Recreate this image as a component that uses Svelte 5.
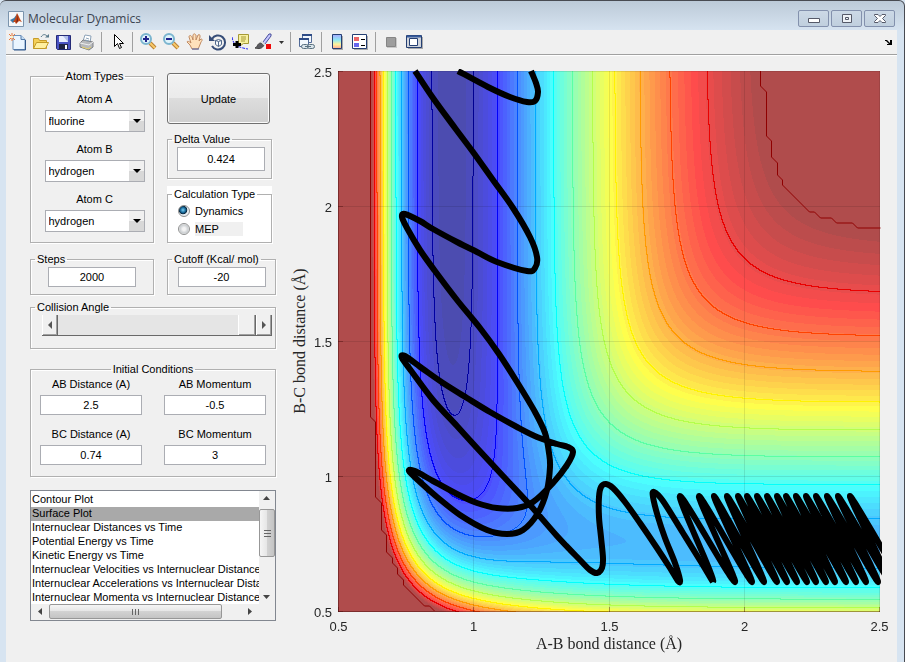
<script>
	import { onMount } from 'svelte';

	const atoms = ['fluorine', 'hydrogen', 'chlorine'];
	let selectedAtoms = { A: 'fluorine', B: 'hydrogen', C: 'hydrogen' };
	let delta = '0.424';
	let calculation = 'Dynamics';
	let steps = '2000';
	let cutoff = '-20';
	let angle = 180;

	let conditions = [
		{ id: 'ab-distance', label: 'AB Distance (A)', value: '2.5' },
		{ id: 'ab-momentum', label: 'AB Momentum', value: '-0.5' },
		{ id: 'bc-distance', label: 'BC Distance (A)', value: '0.74' },
		{ id: 'bc-momentum', label: 'BC Momentum', value: '3' }
	];

	const plots = [
		'Contour Plot',
		'Surface Plot',
		'Internuclear Distances vs Time',
		'Potential Energy vs Time',
		'Kinetic Energy vs Time',
		'Internuclear Velocities vs Internuclear Distance',
		'Internuclear Accelerations vs Internuclear Distance',
		'Internuclear Momenta vs Internuclear Distance'
	];
	let plot = plots[1];

	const ticks = [0.5, 1, 1.5, 2, 2.5];
	const W = 542;
	const H = 541;
	const px = (x) => Math.round(((x - 0.5) * (W - 1)) / 2) + 0.5;
	const py = (y) => Math.round(((2.5 - y) * (H - 1)) / 2) + 0.5;

	// Morse parameters: depth (kcal/mol), range (1/A), equilibrium distance (A), Sato
	const HF = { d: 141.2, b: 2.2187, r: 0.917, k: 0.167 };
	const HH = { d: 109.45, b: 1.942, r: 0.742, k: 0.2 };

	function terms(p, r) {
		const e = Math.exp(-p.b * (r - p.r));
		const f = p.d / 4 / (1 + p.k);
		return [
			f * ((3 + p.k) * e * e - (2 + 6 * p.k) * e),
			f * ((1 + 3 * p.k) * e * e - (6 + 2 * p.k) * e)
		];
	}

	// LEPS energy of the collinear system
	function energy(ab, bc) {
		const [q1, j1] = terms(HF, ab);
		const [q2, j2] = terms(HH, bc);
		const [q3, j3] = terms(HF, ab + bc);
		return q1 + q2 + q3 - Math.sqrt(((j1 - j2) ** 2 + (j2 - j3) ** 2 + (j3 - j1) ** 2) / 2);
	}

	const clamp = (v) => Math.max(0, Math.min(1, v));
	const jet = (t) => [3, 2, 1].map((c) => 255 * clamp(1.5 - Math.abs(4 * t - c)));

	let canvas;

	function drawSurface() {
		const ctx = canvas.getContext('2d');
		const image = ctx.createImageData(W, H);
		const top = Number(cutoff);
		const bottom = -HF.d;
		const levels = 64;
		const first = -137.2;
		const spacing = 10.45;
		const grid = [];
		for (let j = 0; j <= H; j++) {
			const row = new Float64Array(W + 1);
			for (let i = 0; i <= W; i++) {
				row[i] = energy(0.5 + (i * 2) / (W - 1), 2.5 - (j * 2) / (H - 1));
			}
			grid.push(row);
		}
		// the outermost level is drawn as its own line
		const band = (v) => Math.min(10, Math.floor((v - first) / spacing));
		for (let j = 0; j < H; j++) {
			for (let i = 0; i < W; i++) {
				const v = grid[j][i];
				const here = band(v);
				const near = [band(grid[j][i + 1]), band(grid[j + 1][i])];
				const other = near[0] !== here ? near[0] : near[1];
				let rgb;
				if (other !== here) {
					const level = first + spacing * Math.max(here, other);
					rgb = jet((level - bottom) / (top - bottom));
				} else {
					const n = Math.floor(clamp((v - bottom) / (top - bottom)) * levels);
					rgb = jet((Math.min(n, levels - 2) + 1) / levels).map((c) => c * 0.7 + 76);
				}
				image.data.set([...rgb, 255], (j * W + i) * 4);
			}
		}
		ctx.putImageData(image, 0, 0);
	}

	onMount(drawSurface);

	// trajectory through the reaction region, in plot pixels
	const loop = [[193, 0], [198, 12], [200, 21], [197, 30], [189, 31], [172, 26], [150, 16], [120, 0]];
	const path = [
		[77, 0], [95, 27], [117, 57], [135, 81], [155, 109], [175, 137], [192, 166], [199, 186],
		[197, 197], [189, 200], [159, 191], [139, 181], [119, 171], [95, 158], [82, 150], [67, 143],
		[64, 146], [69, 157], [82, 179], [97, 200], [119, 229], [142, 257], [161, 283], [179, 311],
		[197, 341], [207, 362], [211, 382], [212, 396], [209, 419], [200, 442], [185, 459], [169, 463],
		[149, 459], [122, 444], [99, 426], [82, 411], [71, 400], [77, 400], [95, 410], [119, 423],
		[139, 432], [159, 437], [179, 437], [195, 431], [215, 412], [229, 394], [235, 381], [230, 376],
		[219, 373], [199, 366], [179, 356], [152, 341], [129, 327], [105, 312], [85, 298], [67, 285],
		[64, 287], [74, 301], [95, 329], [119, 355], [139, 377], [165, 405], [192, 434], [219, 465],
		[242, 489], [252, 499], [259, 502], [264, 497], [265, 487], [263, 466], [261, 446], [261, 426],
		[263, 416], [268, 413], [275, 417], [287, 431], [302, 452], [319, 477], [332, 497], [340, 510],
		[342, 509], [337, 492], [327, 467], [320, 446], [315, 426], [316, 421], [325, 430], [345, 462],
		[363, 491], [375, 511]
	];

	// vibration of B-C while A is still far away: turning points at the top and the bottom
	const tops = [342, 361, 376, 389, 400, 409, 419, 429, 439, 448, 458, 468, 478, 489, 500, 512];
	const bottoms = [375, 397, 414, 426, 439, 449, 459, 469, 478, 488, 497, 508, 518, 528, 540, 552, 565];
	const vibration = [];
	function swing(x0, y0, x1, y1, drift) {
		for (let n = 0; n <= 16; n++) {
			const u = n / 16;
			const s = (1 - Math.cos(Math.PI * u)) / 2;
			vibration.push([x0 + (x1 - x0 - drift) * s + drift * u, y0 + (y1 - y0) * s]);
		}
	}
	tops.forEach((x, i) => {
		const drift = (bottoms[i + 1] - bottoms[i]) / 2;
		swing(bottoms[i], 511, x, 425, drift);
		swing(x, 425, bottoms[i + 1], 511, drift);
	});

	function smooth(points) {
		let d = `M${points[0]}`;
		for (let i = 0; i < points.length - 1; i++) {
			const a = points[i - 1] ?? points[i];
			const b = points[i];
			const c = points[i + 1];
			const e = points[i + 2] ?? c;
			d += `C${b[0] + (c[0] - a[0]) / 6} ${b[1] + (c[1] - a[1]) / 6} ${c[0] - (e[0] - b[0]) / 6} ${c[1] - (e[1] - b[1]) / 6} ${c[0]} ${c[1]}`;
		}
		return d;
	}
</script>

<div class="window">
	<header class="titlebar">
		<svg class="logo" width="16" height="16" viewBox="0 0 16 16" aria-hidden="true">
			<path d="M.5.5h15v15H.5z" fill="#f4f7fa" stroke="#7b94ad" />
			<path d="M2 9l4-2 3-4-1 6-3 3z" fill="#3d79a8" />
			<path d="M5 11l2-3 2-6c2 3 3 7 5 9l-3-1-3 3-1-2z" fill="#c44716" />
			<path d="M9 3c0 4 0 6-1 9l2-2z" fill="#6b211c" />
		</svg>
		<h1>Molecular Dynamics</h1>
		<button class="caption" aria-label="Minimize">
			<svg width="12" height="12" viewBox="0 0 12 12"><path d="M.5 5.500h11v4H.5z" fill="#fff" stroke="#555968" /></svg>
		</button>
		<button class="caption" aria-label="Maximize">
			<svg width="12" height="12" viewBox="0 0 12 12"><path d="M1.500 1.500h9v8h-9zM4.500 4.500h3v2h-3z" fill="#eef2f6" stroke="#555968" /></svg>
		</button>
		<button class="caption" aria-label="Close">
			<svg width="12" height="12" viewBox="0 0 12 12"><path d="M.5 1.500h3.500l2 2 2-2h3.500v1L8.500 5.500l3 3v1H8l-2-2-2 2H.5v-1l3-3-3-3z" fill="#fff" stroke="#555968" /></svg>
		</button>
	</header>

	<div class="client">
		<nav class="toolbar">
			<button aria-label="New Figure">
				<svg width="18" height="18" viewBox="0 0 18 18"><path d="M4 2.500h8l4 4v10H4z" fill="#eaf5ff" stroke="#6f93bd" /><path d="M12 2.500v4h4" fill="#c7def3" stroke="#5379a8" /><path d="M16.500 7v10H5" fill="none" stroke="#31578a" /><path d="M0 1l6 6M6 1L0 7M3 0v8" stroke="#e9793c" /><path d="M2 3h2v2H2z" fill="#fff3c0" /></svg>
			</button>
			<button aria-label="Open File">
				<svg width="18" height="18" viewBox="0 0 18 18"><path d="M1.500 15.500v-10h5l1 2h7v8z" fill="#f4cf57" stroke="#c79c2a" /><path d="M1.500 15.500l3-6h12l-3 6z" fill="#fff0a0" stroke="#c29a27" /><path d="M9 4c2-3 4-3 6-1" fill="none" stroke="#58788a" /><path d="M13 4.500h4V1z" fill="#58788a" /></svg>
			</button>
			<button aria-label="Save Figure">
				<svg width="18" height="18" viewBox="0 0 18 18"><path d="M1.500 2.500h14v14h-13l-1-1z" fill="#4b54c4" stroke="#252b77" /><path d="M4 3h9v6H4z" fill="#e8edff" /><path d="M8 3h5v6z" fill="#aebde9" /><path d="M4 11h9v5H4z" fill="#202443" /><path d="M10 12h2v4h-2z" fill="#fff" /></svg>
			</button>
			<button aria-label="Print Figure">
				<svg width="18" height="18" viewBox="0 0 18 18"><path d="M5 8l2-6 6 1-1 7z" fill="#fff" stroke="#8ca2b8" /><path d="M2 10l3-3 10 2v5l-4 3-9-3z" fill="#b7b9bc" stroke="#7d7f84" /><path d="M2 10l9 2 4-3" fill="none" stroke="#efefef" /><path d="M4 14l6 2 3-2" stroke="#e5cf68" fill="none" /><path d="M8 5l3 1M7 7l4 1" stroke="#8ca4ba" /></svg>
			</button>
			<span class="separator"></span>
			<button aria-label="Edit Plot">
				<svg width="18" height="18" viewBox="0 0 18 18"><path d="M5.500 1.500v12l3-3 2 5 2-1-2-4h4z" fill="#fff" stroke="#000" /></svg>
			</button>
			<span class="separator"></span>
			<button aria-label="Zoom In">
				<svg width="18" height="18" viewBox="0 0 18 18"><path d="M10 10l5 5" stroke="#b98135" stroke-width="4" /><path d="M10 10l5 5" stroke="#f8c96a" stroke-width="2" /><circle cx="6" cy="6" r="5" fill="#dff3fb" stroke="#7bb5cf" stroke-width="2" /><path d="M3 6h6M6 3v6" stroke="#20248c" stroke-width="2" /></svg>
			</button>
			<button aria-label="Zoom Out">
				<svg width="18" height="18" viewBox="0 0 18 18"><path d="M10 10l5 5" stroke="#b98135" stroke-width="4" /><path d="M10 10l5 5" stroke="#f8c96a" stroke-width="2" /><circle cx="6" cy="6" r="5" fill="#dff3fb" stroke="#7bb5cf" stroke-width="2" /><path d="M3 6h6" stroke="#20248c" stroke-width="2" /></svg>
			</button>
			<button aria-label="Pan">
				<svg width="18" height="18" viewBox="0 0 18 18"><path d="M6 16l-2-4-3-3c0-1 2-1 4 1L3 4c0-2 2-2 3 0l1 3V2c1-2 2-1 3 0v5l2-5c2-1 2 0 2 2l-1 4 2-2c2 0 1 2 0 3l-2 5-1 2z" fill="#ffe1bb" stroke="#c08a62" /><path d="M6 16h7" stroke="#4a5fa3" /></svg>
			</button>
			<button aria-label="Rotate 3D">
				<svg width="18" height="18" viewBox="0 0 18 18"><path d="M3 6a7 7 0 1 1 0 7" fill="none" stroke="#364d78" stroke-width="2" /><path d="M0 2v6h6z" fill="#364d78" /><path d="M6.500 7.500l3-1 3 1v4l-3 2-3-2zM6.500 7.500l3 1 3-1M9.500 8.500v5" fill="#f4f8fb" stroke="#52698c" /></svg>
			</button>
			<button aria-label="Data Cursor">
				<svg width="18" height="18" viewBox="0 0 18 18"><path d="M0 4c1 6 3 10 16 12" fill="none" stroke="#2424f0" stroke-dasharray="3 1" /><path d="M6.500 1.500h10v9h-5l-3 2v-2h-2z" fill="#f7f0a0" stroke="#a59935" /><path d="M9 4h5M9 6h5M9 8h4" stroke="#a59935" /><path d="M1 11.500h8M5 8v7" stroke="#000" stroke-width="3" /></svg>
			</button>
			<button aria-label="Brush Data">
				<svg width="18" height="18" viewBox="0 0 18 18"><path d="M8 9l6-8h2v2l-6 8z" fill="#c4c6ff" stroke="#474c9a" /><path d="M0 15c3-1 2-5 6-5l3 2c-2 4-5 4-9 3z" fill="#5a5a60" stroke="#444" /><path d="M6 8l4 4" stroke="#ddd" stroke-width="2" /><path d="M11 11h5v5h-5z" fill="#f00808" /></svg>
			</button>
			<button class="caret" aria-label="Brush Color">
				<svg width="5" height="3" viewBox="0 0 5 3"><path d="M0 0h5L2.500 3z" fill="#333" /></svg>
			</button>
			<span class="separator"></span>
			<button aria-label="Link Plot">
				<svg width="18" height="18" viewBox="0 0 18 18"><path d="M4.500 1.500h9v8h-9z" fill="#f3f8fd" stroke="#526b98" /><path d="M4 2h10" stroke="#2f4c86" stroke-width="2" /><path d="M1.500 5.500h9v8h-9z" fill="#f3f8fd" stroke="#526b98" /><path d="M1 6h10" stroke="#2f4c86" stroke-width="2" /><rect x="3.500" y="11.500" width="7" height="4" rx="2" fill="#d9e4ea" stroke="#5a7180" /><rect x="9.500" y="11.500" width="7" height="4" rx="2" fill="#d9e4ea" stroke="#5a7180" /><path d="M7 13.500h6" stroke="#5a7180" /></svg>
			</button>
			<span class="separator"></span>
			<button aria-label="Insert Colorbar">
				<svg width="18" height="18" viewBox="0 0 18 18">
					<defs><linearGradient id="bar" x1="0" y1="0" x2="0" y2="1"><stop offset="0" stop-color="#a9a9ff" /><stop offset=".4" stop-color="#8feaf4" /><stop offset=".7" stop-color="#fff39a" /><stop offset="1" stop-color="#ffa997" /></linearGradient></defs>
					<path d="M4 3h10v14H4z" fill="#aaa" /><path d="M3.500 1.500h9v14h-9z" fill="url(#bar)" stroke="#243f73" />
				</svg>
			</button>
			<button aria-label="Insert Legend">
				<svg width="18" height="18" viewBox="0 0 18 18"><path d="M2 3h14v14H2z" fill="#aaa" /><path d="M.5 1.500h14v14H.5z" fill="#fff" stroke="#243f73" /><path d="M2 4h5v4H2z" fill="#ed6666" /><path d="M2 10h5v4H2z" fill="#6666ef" /><path d="M9 6.500h4M9 12.500h4" stroke="#000" /></svg>
			</button>
			<span class="separator"></span>
			<button aria-label="Hide Plot Tools">
				<svg width="18" height="18" viewBox="0 0 18 18"><path d="M4 5h10v10H4z" fill="#c9c9c9" /><path d="M3.500 4.500h9v9h-9z" fill="#9d9d9d" stroke="#858585" /></svg>
			</button>
			<button aria-label="Show Plot Tools">
				<svg width="18" height="18" viewBox="0 0 18 18"><path d="M2 4h15v12H2z" fill="#aaa" /><path d="M.5 2.500h15v12H.5z" fill="#cfd3da" stroke="#243f73" /><path d="M1 3.500h14" stroke="#365b9d" stroke-width="2" /><path d="M3.500 5.500h8v7h-8z" fill="#fff" stroke="#243f73" /></svg>
			</button>
			<button class="dock" aria-label="Dock Figure">
				<svg width="8" height="6" viewBox="0 0 8 6"><path d="M0 1h2l3 3V1h2v5H2V5h2L1 2H0z" fill="#000" /></svg>
			</button>
		</nav>

		<main>
			<form class="controls" on:submit|preventDefault={drawSurface}>
				<fieldset class="atoms">
					<legend>Atom Types</legend>
					{#each Object.keys(selectedAtoms) as name}
						<div class="field">
							<label for="atom-{name}">Atom {name}</label>
							<span class="dropdown">
								<select id="atom-{name}" bind:value={selectedAtoms[name]}>
									{#each atoms as atom}
										<option value={atom}>{atom}</option>
									{/each}
								</select>
							</span>
						</div>
					{/each}
				</fieldset>

				<div class="side">
					<button class="update" type="submit">Update</button>
					<fieldset>
						<legend><label for="delta">Delta Value</label></legend>
						<input id="delta" class="tall" type="text" bind:value={delta} />
					</fieldset>
					<div class="white">
						<fieldset>
							<legend>Calculation Type</legend>
							<label class="choice">
								<input type="radio" name="calculation" value="Dynamics" bind:group={calculation} />
								Dynamics
							</label>
							<label class="choice">
								<input type="radio" name="calculation" value="MEP" bind:group={calculation} />
								<span class="grey">MEP</span>
							</label>
						</fieldset>
					</div>
				</div>

				<fieldset>
					<legend><label for="steps">Steps</label></legend>
					<input id="steps" type="text" bind:value={steps} />
				</fieldset>
				<fieldset>
					<legend><label for="cutoff">Cutoff (Kcal/ mol)</label></legend>
					<input id="cutoff" type="text" bind:value={cutoff} />
				</fieldset>

				<fieldset class="wide angle">
					<legend><label for="angle">Collision Angle</label></legend>
					<div class="slider">
						<button type="button" aria-label="Decrease angle" on:click={() => (angle -= 1)}>
							<svg width="4" height="8" viewBox="0 0 4 8"><path d="M4 0v8L0 4z" fill="#555" /></svg>
						</button>
						<input id="angle" type="range" min="0" max="180" bind:value={angle} />
						<button type="button" aria-label="Increase angle" on:click={() => (angle += 1)}>
							<svg width="4" height="8" viewBox="0 0 4 8"><path d="M0 0v8l4-4z" fill="#555" /></svg>
						</button>
					</div>
				</fieldset>

				<fieldset class="wide initial">
					<legend>Initial Conditions</legend>
					{#each conditions as condition}
						<div class="field">
							<label for={condition.id}>{condition.label}</label>
							<input id={condition.id} type="text" bind:value={condition.value} />
						</div>
					{/each}
				</fieldset>

				<div class="wide listbox">
					<select size="8" aria-label="Plot" bind:value={plot}>
						{#each plots as name}
							<option value={name}>{name}</option>
						{/each}
					</select>
					<div class="bar vertical">
						<svg width="16" height="14" viewBox="0 0 16 14"><path d="M4 9h7L7.500 5z" fill="#444" /></svg>
						<span class="thumb"></span>
						<svg width="16" height="14" viewBox="0 0 16 14"><path d="M4 5h7L7.500 9z" fill="#444" /></svg>
					</div>
					<div class="bar horizontal">
						<svg width="18" height="16" viewBox="0 0 18 16"><path d="M11 4v7L7 7.500z" fill="#444" /></svg>
						<span class="thumb"></span>
						<svg width="18" height="16" viewBox="0 0 18 16"><path d="M7 4v7l4-3.500z" fill="#444" /></svg>
					</div>
				</div>
			</form>

			<figure>
				<canvas bind:this={canvas} width={W} height={H}></canvas>
				<svg class="axes" viewBox="0 0 {W} {H}">
					<clipPath id="plot-area"><rect x="0" y="-2" width={W + 2} height={H + 4} /></clipPath>
					{#each ticks as tick}
						<path class="grid" d="M{px(tick)} 0V{H}M0 {py(tick)}H{W}" />
						<path class="tick" d="M{px(tick)} {H}v-5M0 {py(tick)}h5" />
						<text x={px(tick)} y={H + 19} text-anchor="middle">{tick}</text>
						<text x="-6" y={py(tick) + 5} text-anchor="end">{tick}</text>
					{/each}
					<path class="edge" d="M.5 0V540.500H{W}" />
					<path
						class="level"
						d="M422.500 0V15l6 6v44l5 5v16l6 6v12l5 5v5l27 27h5l6 6h11l5 5h16l5 5h23M32.500 0V346l5 5v75l6 6v27l5 5v17l6 6v5l5 5v6l6 6v5l21 21h5l5 5"
					/>
					<g class="trajectory" clip-path="url(#plot-area)">
						<path d={smooth(loop)} />
						<path d={smooth(path)} />
						<polyline points={vibration.join(' ')} />
					</g>
					<text class="title" x="271" y="578" text-anchor="middle">A-B bond distance (Å)</text>
					<text class="title" transform="translate(-33 270) rotate(-90)" text-anchor="middle">B-C bond distance (Å)</text>
				</svg>
			</figure>
		</main>
	</div>
</div>

<style>
	:global(body) {
		margin: 0;
		background: #d7e4f1;
	}
	.window {
		box-sizing: border-box;
		padding: 0 7px 7px 6px;
		border: solid #484b52;
		border-width: 1px 1px 1px 0;
		border-radius: 6px 6px 0 0;
		background: #d7e4f1 linear-gradient(#bccad8, #d7e4f1 30px) no-repeat;
		font: 11px/14px "Liberation Sans", Arial, sans-serif;
		color: #000;
	}
	.titlebar {
		display: flex;
		align-items: center;
		gap: 2px;
		height: 29px;
		padding: 6px 2px 0 2px;
		box-sizing: border-box;
	}
	h1 {
		flex: 1;
		margin: 0 0 0 2px;
		font: 12px/16px "Open Sans", "Noto Sans", sans-serif;
		color: #3c4450;
	}
	.caption {
		width: 31px;
		height: 17px;
		padding: 0;
		border: 1px solid #8391ad;
		border-radius: 2px;
		background: linear-gradient(#ccd9e6, #c0cfde);
		display: flex;
		align-items: center;
		justify-content: center;
	}
	.client {
		background: #f0f0f0;
	}
	.toolbar {
		display: flex;
		align-items: center;
		height: 24px;
		border-bottom: 1px solid #a0a0a0;
		box-shadow: 0 1px #fff;
	}
	.toolbar button {
		display: flex;
		align-items: center;
		justify-content: center;
		width: 23px;
		height: 24px;
		padding: 0;
		border: 0;
		background: none;
	}
	.toolbar .caret {
		width: 12px;
	}
	.toolbar .dock {
		width: 16px;
		margin-left: auto;
	}
	.separator {
		box-sizing: border-box;
		width: 8px;
		height: 20px;
		border-right: 4px solid transparent;
		background: linear-gradient(#a0a0a0, #a0a0a0) right / 1px 100% no-repeat content-box;
	}
	main {
		display: flex;
		align-items: flex-start;
		padding: 0 17px 42px 24px;
	}

	.controls {
		display: grid;
		grid-template-columns: 124px 109px;
		gap: 8px 13px;
		flex: none;
		width: 246px;
		padding-top: 13px;
	}
	.wide {
		grid-column: 1 / -1;
	}
	fieldset {
		box-sizing: border-box;
		min-width: 0;
		margin: 0;
		padding: 0 9px 7px;
		border: 1px solid #b0b0b0;
		box-shadow: 1px 1px #fff, inset 1px 1px #fff;
	}
	legend {
		height: 16px;
		margin-left: -5px;
		padding: 0 2px;
		line-height: 16px;
		white-space: nowrap;
	}
	.field {
		display: flex;
		flex-direction: column;
		align-items: center;
		gap: 4px;
	}
	input[type='text'] {
		display: block;
		box-sizing: border-box;
		width: 88px;
		height: 20px;
		margin: 0 auto;
		padding: 0;
		border: 1px solid #abadb3;
		background: #fff;
		font: inherit;
		text-align: center;
	}
	input[type='text'].tall {
		height: 24px;
	}
	.atoms {
		padding: 8px 7px 0 12px;
	}
	.atoms legend,
	.initial legend {
		margin: 0 auto;
	}
	.atoms .field {
		margin-bottom: 10px;
	}
	.atoms .field:last-child {
		margin-bottom: 2px;
	}
	.dropdown {
		position: relative;
	}
	.dropdown::after {
		content: '';
		position: absolute;
		right: 4px;
		top: 9px;
		border: 4px solid transparent;
		border-top: 4px solid #000;
		border-bottom: 0;
		pointer-events: none;
	}
	.dropdown select {
		display: block;
		appearance: none;
		box-sizing: border-box;
		width: 100px;
		height: 22px;
		padding: 0 3px;
		border: 1px solid #abadb3;
		border-radius: 0;
		background: linear-gradient(#f0f0f0 50%, #d8d8d8 50%) right / 15px 100% no-repeat #fff;
		font: inherit;
		color: #000;
	}
	.side {
		display: flex;
		flex-direction: column;
		gap: 7px;
		width: 105px;
	}
	.update {
		width: 103px;
		height: 51px;
		margin-top: 5px;
		border: 1px solid #707070;
		border-radius: 3px;
		background: linear-gradient(#f2f2f2, #ebebeb 48%, #dddddd 50%, #cfcfcf);
		box-shadow: inset 0 0 0 1px #fafafa;
		font: inherit;
	}
	.white {
		background: #fff;
	}
	.white fieldset {
		padding-bottom: 4px;
	}
	.choice {
		display: flex;
		align-items: center;
		gap: 5px;
		height: 18px;
		margin-left: 1px;
	}
	.choice input {
		appearance: none;
		box-sizing: border-box;
		width: 12px;
		height: 12px;
		margin: 0;
		border: 1px solid #8e8f8f;
		border-radius: 50%;
		background: radial-gradient(#f4f4f4 20%, #c9cdd0 60%, #f4f4f4 70%);
	}
	.choice input:checked {
		background: radial-gradient(circle at 4px 4px, #7cd1f4, #176a9b 30%, #0b2a40 45%, #e8eef2 55%);
	}
	.grey {
		width: 48px;
		background: #f0f0f0;
	}
	.angle {
		height: 50px;
		margin-top: -4px;
		padding: 0 3px 0 11px;
	}
	.angle legend {
		margin-left: -7px;
	}
	.slider {
		display: flex;
		height: 21px;
		box-sizing: border-box;
		border-bottom: 1px solid #696969;
	}
	.slider button {
		display: flex;
		align-items: center;
		justify-content: center;
		width: 16px;
		padding: 0;
		border: solid;
		border-width: 0 1px 0 1px;
		border-color: #fff #696969 #a0a0a0 #fff;
		background: #f0f0f0;
		box-shadow: inset -1px -1px #a0a0a0;
	}
	.slider input {
		flex: 1;
		min-width: 0;
		margin: 0;
		appearance: none;
		background: #e5e5e5;
	}
	.slider input::-webkit-slider-thumb {
		appearance: none;
		box-sizing: border-box;
		width: 18px;
		height: 20px;
		border: solid;
		border-width: 0 1px 0 1px;
		border-color: #fff #696969 #a0a0a0 #fff;
		background: #f0f0f0;
		box-shadow: inset -1px -1px #a0a0a0;
	}
	.initial {
		display: grid;
		grid-template-columns: 102px 102px;
		justify-content: space-between;
		gap: 12px 0;
		margin-top: 4px;
		padding: 0 9px 11px;
	}
	.initial input[type='text'] {
		width: 102px;
	}
	.listbox {
		display: grid;
		grid-template-columns: 1fr 16px;
		box-sizing: border-box;
		margin-top: 5px;
		border: 1px solid #828790;
		background: #f0f0f0;
	}
	.listbox select {
		display: block;
		box-sizing: border-box;
		width: 100%;
		min-width: 0;
		height: 113px;
		padding: 2px 0 0;
		border: 0;
		border-radius: 0;
		outline: 0;
		overflow: hidden;
		background: #fff;
		font: inherit;
		color: #000;
	}
	.listbox option {
		min-height: 14px;
		height: 14px;
		padding: 0 1px;
		line-height: 14px;
	}
	.listbox option:checked {
		background: #a9a9a9 linear-gradient(#a9a9a9, #a9a9a9);
		color: #000;
	}
	.bar {
		display: flex;
		background: #f0f0f0;
	}
	.vertical {
		flex-direction: column;
		justify-content: space-between;
	}
	.thumb {
		box-sizing: border-box;
		border: 1px solid #979797;
		border-radius: 2px;
	}
	.vertical .thumb {
		height: 48px;
		margin-bottom: auto;
		margin-top: 4px;
		background:
			repeating-linear-gradient(#666 0 1px, transparent 1px 3px) center / 7px 7px no-repeat,
			linear-gradient(90deg, #f5f5f5, #e6e6e6 48%, #d2d2d2 50%, #c4c4c4);
	}
	.horizontal .thumb {
		width: 173px;
		height: 15px;
		margin-right: auto;
		background:
			repeating-linear-gradient(90deg, #666 0 1px, transparent 1px 3px) center / 7px 6px no-repeat,
			linear-gradient(#f5f5f5, #e6e6e6 48%, #d2d2d2 50%, #c4c4c4);
	}

	figure {
		position: relative;
		flex: 1;
		min-width: 0;
		margin: 16px 0 0 62px;
	}
	canvas {
		display: block;
		width: 100%;
	}
	.axes {
		position: absolute;
		inset: 0;
		width: 100%;
		overflow: visible;
		fill: none;
	}
	.axes text {
		fill: #262626;
		font: 13px "Liberation Sans", Arial, sans-serif;
	}
	.axes .title {
		font: 16px "Liberation Serif", "Times New Roman", serif;
	}
	.grid {
		stroke: rgba(0, 0, 0, .1);
	}
	.tick,
	.edge {
		stroke: rgba(60, 0, 0, .35);
	}
	.level {
		stroke: #8f0000;
	}
	.trajectory {
		stroke: #000;
		stroke-width: 6;
		stroke-linejoin: round;
	}
</style>
